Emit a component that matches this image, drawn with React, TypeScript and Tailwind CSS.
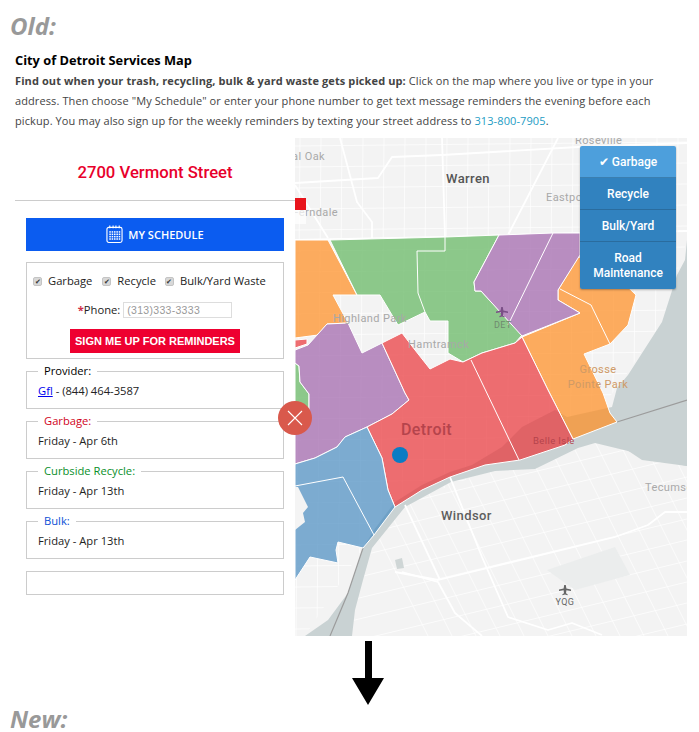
const orange1 = "295,240 328,240 357,295 333,295 348,323 327,324 318,335 295,338"
const orange2 = "578,257 600,260 636,295 628,325 610,344 584,354 603,393 610,413 617,422 573,439 548,390 522,337 580,313 558,300 558,290"
const green1 = "330,240 445,237 499,235 474,282 475,291 481,291 522,335 515,343 482,353 463,362 448,353 448,321 430,321 425,312 398,325 380,295 357,295"
const green2 = "295,363 299,366 300,382 309,394 309,410 295,425"
const purple1 = "499,235 553,233 580,233 580,255 558,290 558,300 580,313 522,336 481,291 475,291 474,282"
const purple2 = "295,350 308,345 327,324 348,323 362,353 382,343 405,393 409,400 392,414 367,427 345,437 337,447 315,458 295,464 295,425 309,410 309,394 300,382 299,366 295,363"
const red1 = "382,343 402,333 415,350 430,369 450,359 463,362 482,353 515,343 522,337 548,390 573,439 565,445 520,460 485,465 450,477 422,490 395,507 388,490 382,458 367,427 392,414 409,400 405,393"
const red2 = "295,340 307,339 307,344 295,348"
const blue = "295,464 315,458 337,447 345,437 367,427 382,458 388,490 395,507 374,535 363,548 338,542 336,550 338,563 310,557 295,580"
const water =
  "687,240 685,260 677,275 662,322 628,375 617,388 612,407 567,417 555,410 522,427 502,447 472,465 450,472 422,485 395,502 374,530 363,548 348,593 328,620 305,636 352,636 355,610 363,580 372,548 405,507 451,482 495,471 535,469 578,448 595,443 628,451 662,461 687,466"

const labels = [
  { t: "Royal Oak", x: 325, y: 160, a: "end", s: 11, c: "#a9a9a9", w: 400 },
  { t: "Ferndale", x: 338, y: 216, a: "end", s: 11, c: "#a9a9a9", w: 400 },
  { t: "Warren", x: 446, y: 183, a: "start", s: 13, c: "#555555", w: 500 },
  { t: "Eastpointe", x: 546, y: 201, a: "start", s: 11, c: "#a9a9a9", w: 400 },
  { t: "Roseville", x: 575, y: 144, a: "start", s: 11, c: "#a9a9a9", w: 400 },
  { t: "Highland Park", x: 333, y: 322, a: "start", s: 11, c: "#a8a8a8", w: 400 },
  { t: "Hamtramck", x: 408, y: 348, a: "start", s: 11, c: "#a8a8a8", w: 400 },
  { t: "DET", x: 494, y: 328, a: "start", s: 9, c: "#6f8a6f", w: 400 },
  { t: "Grosse", x: 598, y: 373, a: "middle", s: 11, c: "#cf9a66", w: 400 },
  { t: "Pointe Park", x: 598, y: 388, a: "middle", s: 11, c: "#cf9a66", w: 400 },
  { t: "Detroit", x: 401, y: 435, a: "start", s: 16, c: "#b5444c", w: 500 },
  { t: "Belle Isle", x: 533, y: 444, a: "start", s: 9.5, c: "#b5444c", w: 400 },
  { t: "Windsor", x: 441, y: 520, a: "start", s: 13, c: "#5e5e5e", w: 500 },
  { t: "Tecumseh", x: 645, y: 491, a: "start", s: 11, c: "#a9a9a9", w: 400 },
  { t: "YQG", x: 565, y: 605, a: "middle", s: 9, c: "#666666", w: 400 },
]

const majorRoads = [
  "295,183 378,178 392,157 442,155 578,147 687,143",
  "442,138 445,237",
  "340,138 357,202 372,222 372,238",
  "295,185 328,238",
  "558,138 508,235",
  "295,240 445,237 580,233 687,231",
  "405,505 440,580",
  "395,572 438,580 615,537 648,525 665,512 687,512",
  "450,477 482,557 508,617 548,630 572,623 602,635",
  "402,572 438,582 455,613 482,636",
]

const streets = Array.from({ length: 19 }, (_, i) => i)

function Plane({ x, y, color }: { x: number; y: number; color: string }) {
  return (
    <path
      transform={`translate(${x} ${y})`}
      d="M-.8-5h1.6l.6 3.6L6-.4v1.3L1.4.3 1 3.3l1.6 1v.9L0 4.6l-2.6.6v-.9l1.6-1-.4-3L-6 .9V-.4l4.6-1z"
      fill={color}
    />
  )
}

function MapArt() {
  return (
    <svg viewBox="295 138 392 498" className="block w-full h-full">
      <defs>
        <clipPath id="windsor">
          <polygon points="405,507 451,482 495,471 535,469 578,448 595,443 628,451 687,466 687,636 352,636 355,610 363,580 372,548" />
        </clipPath>
        <clipPath id="michigan">
          <polygon points="295,138 687,138 687,240 662,322 617,388 573,439 395,507 363,548 305,636 295,636" />
        </clipPath>
      </defs>
      <rect x="295" y="138" width="392" height="498" fill="#f3f3f3" />

      {/* street grids */}
      <g clipPath="url(#michigan)" stroke="#ffffff" strokeWidth="0.7">
        {streets.map((i) => (
          <line key={i} x1={300 + i * 21} y1="138" x2={296 + i * 21} y2="636" />
        ))}
        {Array.from({ length: 24 }, (_, i) => (
          <line key={i} x1="295" y1={146 + i * 21} x2="687" y2={142 + i * 21} />
        ))}
      </g>
      <g clipPath="url(#windsor)" stroke="#ffffff" strokeWidth="0.7">
        {streets.map((i) => (
          <line key={i} x1={330 + i * 24} y1="440" x2={430 + i * 24} y2="640" />
        ))}
        {Array.from({ length: 16 }, (_, i) => (
          <line key={i} x1="330" y1={500 + i * 21} x2="687" y2={414 + i * 21} />
        ))}
      </g>
      <polygon points="547,570 615,547 630,575 575,590" fill="#ebeded" />
      <polygon points="395,560 402,558 404,568 397,569" fill="#cfd6d6" />

      <polygon points={water} fill="#c9d2d3" />
      <polygon points="642,460 687,466 687,400 617,422 612,440" fill="#c9d2d3" />
      <polyline points="617,422 687,400" fill="none" stroke="#9c9c9c" strokeWidth="1.2" />
      <polyline points="363,548 348,593 330,636" fill="none" stroke="#9c9c9c" strokeWidth="1.2" />

      <g fill="none" stroke="#ffffff" strokeWidth="1.8" strokeLinejoin="round">
        {majorRoads.map((r) => (
          <polyline key={r} points={r} />
        ))}
      </g>

      {/* service zones */}
      <g fillOpacity="0.7" stroke="#ffffff" strokeWidth="1">
        <polygon points={orange1} fill="#ff8c1e" />
        <polygon points={orange2} fill="#ff8c1e" />
        <polygon points={green1} fill="#60b55d" />
        <polygon points={green2} fill="#60b55d" />
        <polygon points={purple1} fill="#9e61aa" />
        <polygon points={purple2} fill="#9e61aa" />
        <polygon points={red1} fill="#e93338" />
        <polygon points={red2} fill="#e93338" />
        <polygon points={blue} fill="#498cc1" />
      </g>
      <polygon points="295,487 298,487 308,507 303,513 305,522 295,530" fill="#f4f4f4" />
      <g fill="none" stroke="#ffffff" strokeWidth="1">
        <polyline points="445,237 445,251 417,251 418,293 425,312" />
        <line x1="553" y1="233" x2="508" y2="325" />
        <polyline points="560,289 591,305 610,344" />
        <line x1="471" y1="360" x2="519" y2="460" />
        <polyline points="295,486 343,477 374,535" />
      </g>

      <g fontFamily="Roboto, 'Liberation Sans', sans-serif">
        {labels.map((l) => (
          <text key={l.t} x={l.x} y={l.y} textAnchor={l.a as "start" | "middle" | "end"} fontSize={l.s} fontWeight={l.w} fill={l.c} letterSpacing="0.4">
            {l.t}
          </text>
        ))}
      </g>
      <Plane x={502} y={312} color="#7a4f86" />
      <Plane x={565} y={590} color="#666666" />
      <circle cx="400" cy="455" r="8" fill="#0a7cc4" />
    </svg>
  )
}

function CalendarIcon() {
  return (
    <svg viewBox="0 0 18 20" className="w-[17px] h-[20px] -mt-[1px]" fill="none">
      <rect x="1" y="3" width="16" height="16" rx="2" stroke="#ffffff" strokeWidth="1.2" />
      {[4, 7.5, 10.5, 14].map((x) => (
        <line key={x} x1={x} y1="1" x2={x} y2="4" stroke="#ffffff" strokeWidth="1.2" />
      ))}
      {[7, 9.5, 12, 14.5].map((y) =>
        [3.5, 6, 8.5, 11, 13.5].map((x) => <rect key={`${x}-${y}`} x={x} y={y} width="1.6" height="1.6" fill="#ffffff" />),
      )}
    </svg>
  )
}

function Check({ label, className }: { label: string; className: string }) {
  return (
    <label className={`flex items-center gap-[6px] ${className}`}>
      <span className="w-[9px] h-[9px] rounded-[2px] bg-[#d8d8d8] border border-[#c4c4c4] flex items-center justify-center text-[7px] leading-none text-[#333]">
        ✔
      </span>
      {label}
    </label>
  )
}

function InfoBox({ title, color, children }: { title: string; color: string; children: React.ReactNode }) {
  return (
    <fieldset className="mt-[3px] border border-[#cccccc] px-[11px] pb-[7px]">
      <legend className={`px-[6px] text-[11.2px] leading-[18px] ${color}`}>{title}</legend>
      <div className="pt-[1px] text-[11.2px] leading-[20px] text-[#222]">{children}</div>
    </fieldset>
  )
}

const menuItems = ["✔ Garbage", "Recycle", "Bulk/Yard", "Road Maintenance"]

export default function App() {
  return (
    <div className="w-[699px] h-[732px] overflow-hidden bg-white font-['Open_Sans',sans-serif]">
      <div className="h-[50px] pl-[10px] text-[24px] leading-[52px] font-bold italic text-[#999999]">Old:</div>

      <div className="px-[15px]">
        <h1 className="text-[12.8px] leading-[20px] font-bold text-black">City of Detroit Services Map</h1>
        <p className="pt-[1px] text-[11px] tracking-[0.1px] leading-[20px] text-[#444444] whitespace-nowrap">
          <b>Find out when your trash, recycling, bulk &amp; yard waste gets picked up:</b> Click on the map where you live or type in your
          <br />
          address. Then choose "My Schedule" or enter your phone number to get text message reminders the evening before each
          <br />
          pickup. You may also sign up for the weekly reminders by texting your street address to{" "}
          <a className="text-[#1c9cc4]">313-800-7905</a>.
        </p>
      </div>

      <div className="mt-[7px] flex h-[498px]">
        <div className="w-[295px] pl-[15px]">
          <div className="h-[63px] pt-[8px] border-b border-[#cccccc] flex items-center justify-center font-['Roboto',sans-serif] font-medium text-[16.7px] text-[#e8002b]">
            2700 Vermont Street
          </div>

          <div className="ml-[11px] w-[258px]">
            <button className="mt-[17px] w-full h-[33px] bg-[#0b5cf0] flex items-center justify-center gap-[5px] text-[11px] font-semibold text-white">
              <CalendarIcon />
              <span className="pt-[2px]">MY SCHEDULE</span>
            </button>

            <div className="mt-[11px] h-[97px] border border-[#cccccc] text-[11.2px] text-[#222]">
              <div className="h-[36px] pt-[1px] flex items-center">
                <Check label="Garbage" className="ml-[6px]" />
                <Check label="Recycle" className="ml-[10px]" />
                <Check label="Bulk/Yard Waste" className="ml-[9px]" />
              </div>
              <div className="h-[22px] flex items-center justify-center gap-[3px]">
                <span>
                  <span className="text-[#d0304a] font-bold">*</span>Phone:
                </span>
                <input
                  placeholder="(313)333-3333"
                  className="w-[109px] h-[16px] px-[3px] border border-[#dddddd] font-['Liberation_Sans',sans-serif] text-[10.5px] tracking-[0.3px] placeholder:text-[#999999]"
                />
              </div>
              <button className="block mx-auto mt-[8px] w-[170px] h-[24px] bg-[#ee0030] text-white whitespace-nowrap font-['Liberation_Sans',sans-serif] font-bold text-[11px]">
                SIGN ME UP FOR REMINDERS
              </button>
            </div>

            <InfoBox title="Provider:" color="text-black">
              <a className="text-[#0000ee] underline">Gfl</a> - (844) 464-3587
            </InfoBox>
            <InfoBox title="Garbage:" color="text-[#d0021b]">
              Friday - Apr 6th
            </InfoBox>
            <InfoBox title="Curbside Recycle:" color="text-[#0a8f2a]">
              Friday - Apr 13th
            </InfoBox>
            <InfoBox title="Bulk:" color="text-[#0b4fd6]">
              Friday - Apr 13th
            </InfoBox>
            <div className="mt-[12px] h-[24px] border border-[#cccccc]" />
          </div>
        </div>

        <div className="relative w-[392px] h-[498px]">
          <MapArt />

          {/* red marker + white label chip from the overlapping panel */}
          <div className="absolute left-0 top-[60px] w-[11px] h-[12px] bg-[#e8141c]" />
          <div className="absolute left-0 top-[72px] w-[11px] h-[14px] bg-white/70" />

          {/* close button straddles the panel edge */}
          <button className="absolute -left-[17px] top-[263px] w-[34px] h-[34px] rounded-full bg-[#d9594c] flex items-center justify-center">
            <svg viewBox="0 0 16 16" className="w-[16px] h-[16px]" stroke="#ffffff" strokeWidth="1.1" fill="none">
              <path d="M1 1l14 14M15 1L1 15" />
            </svg>
          </button>

          <div className="absolute left-[285px] top-[8px] w-[96px] rounded-[2px] overflow-hidden shadow-[0_1px_2px_rgba(0,0,0,0.3)] font-['Roboto',sans-serif] font-medium text-[12px] text-white text-center">
            {menuItems.map((item, i) => (
              <div
                key={item}
                className={
                  i === 0
                    ? "h-[32px] flex items-center justify-center bg-[#4d9fdc] border-b border-[#3b7fb0]"
                    : i === 3
                      ? "h-[47px] flex items-center justify-center bg-[#3182bf] leading-[15px] px-[8px]"
                      : "h-[32px] flex items-center justify-center bg-[#3182bf] border-b border-[#2a6c9e]"
                }
              >
                {item}
              </div>
            ))}
          </div>
        </div>
      </div>

      <div className="mt-[5px] ml-[352px] w-[32px] h-[64px]">
        <svg viewBox="0 0 32 64" className="w-full h-full" fill="#000000">
          <path d="M13 0h7v37h12L16 64 0 37h13z" />
        </svg>
      </div>
      <div className="pl-[10px] text-[24px] leading-[27px] font-bold italic text-[#999999]">New:</div>
    </div>
  )
}
